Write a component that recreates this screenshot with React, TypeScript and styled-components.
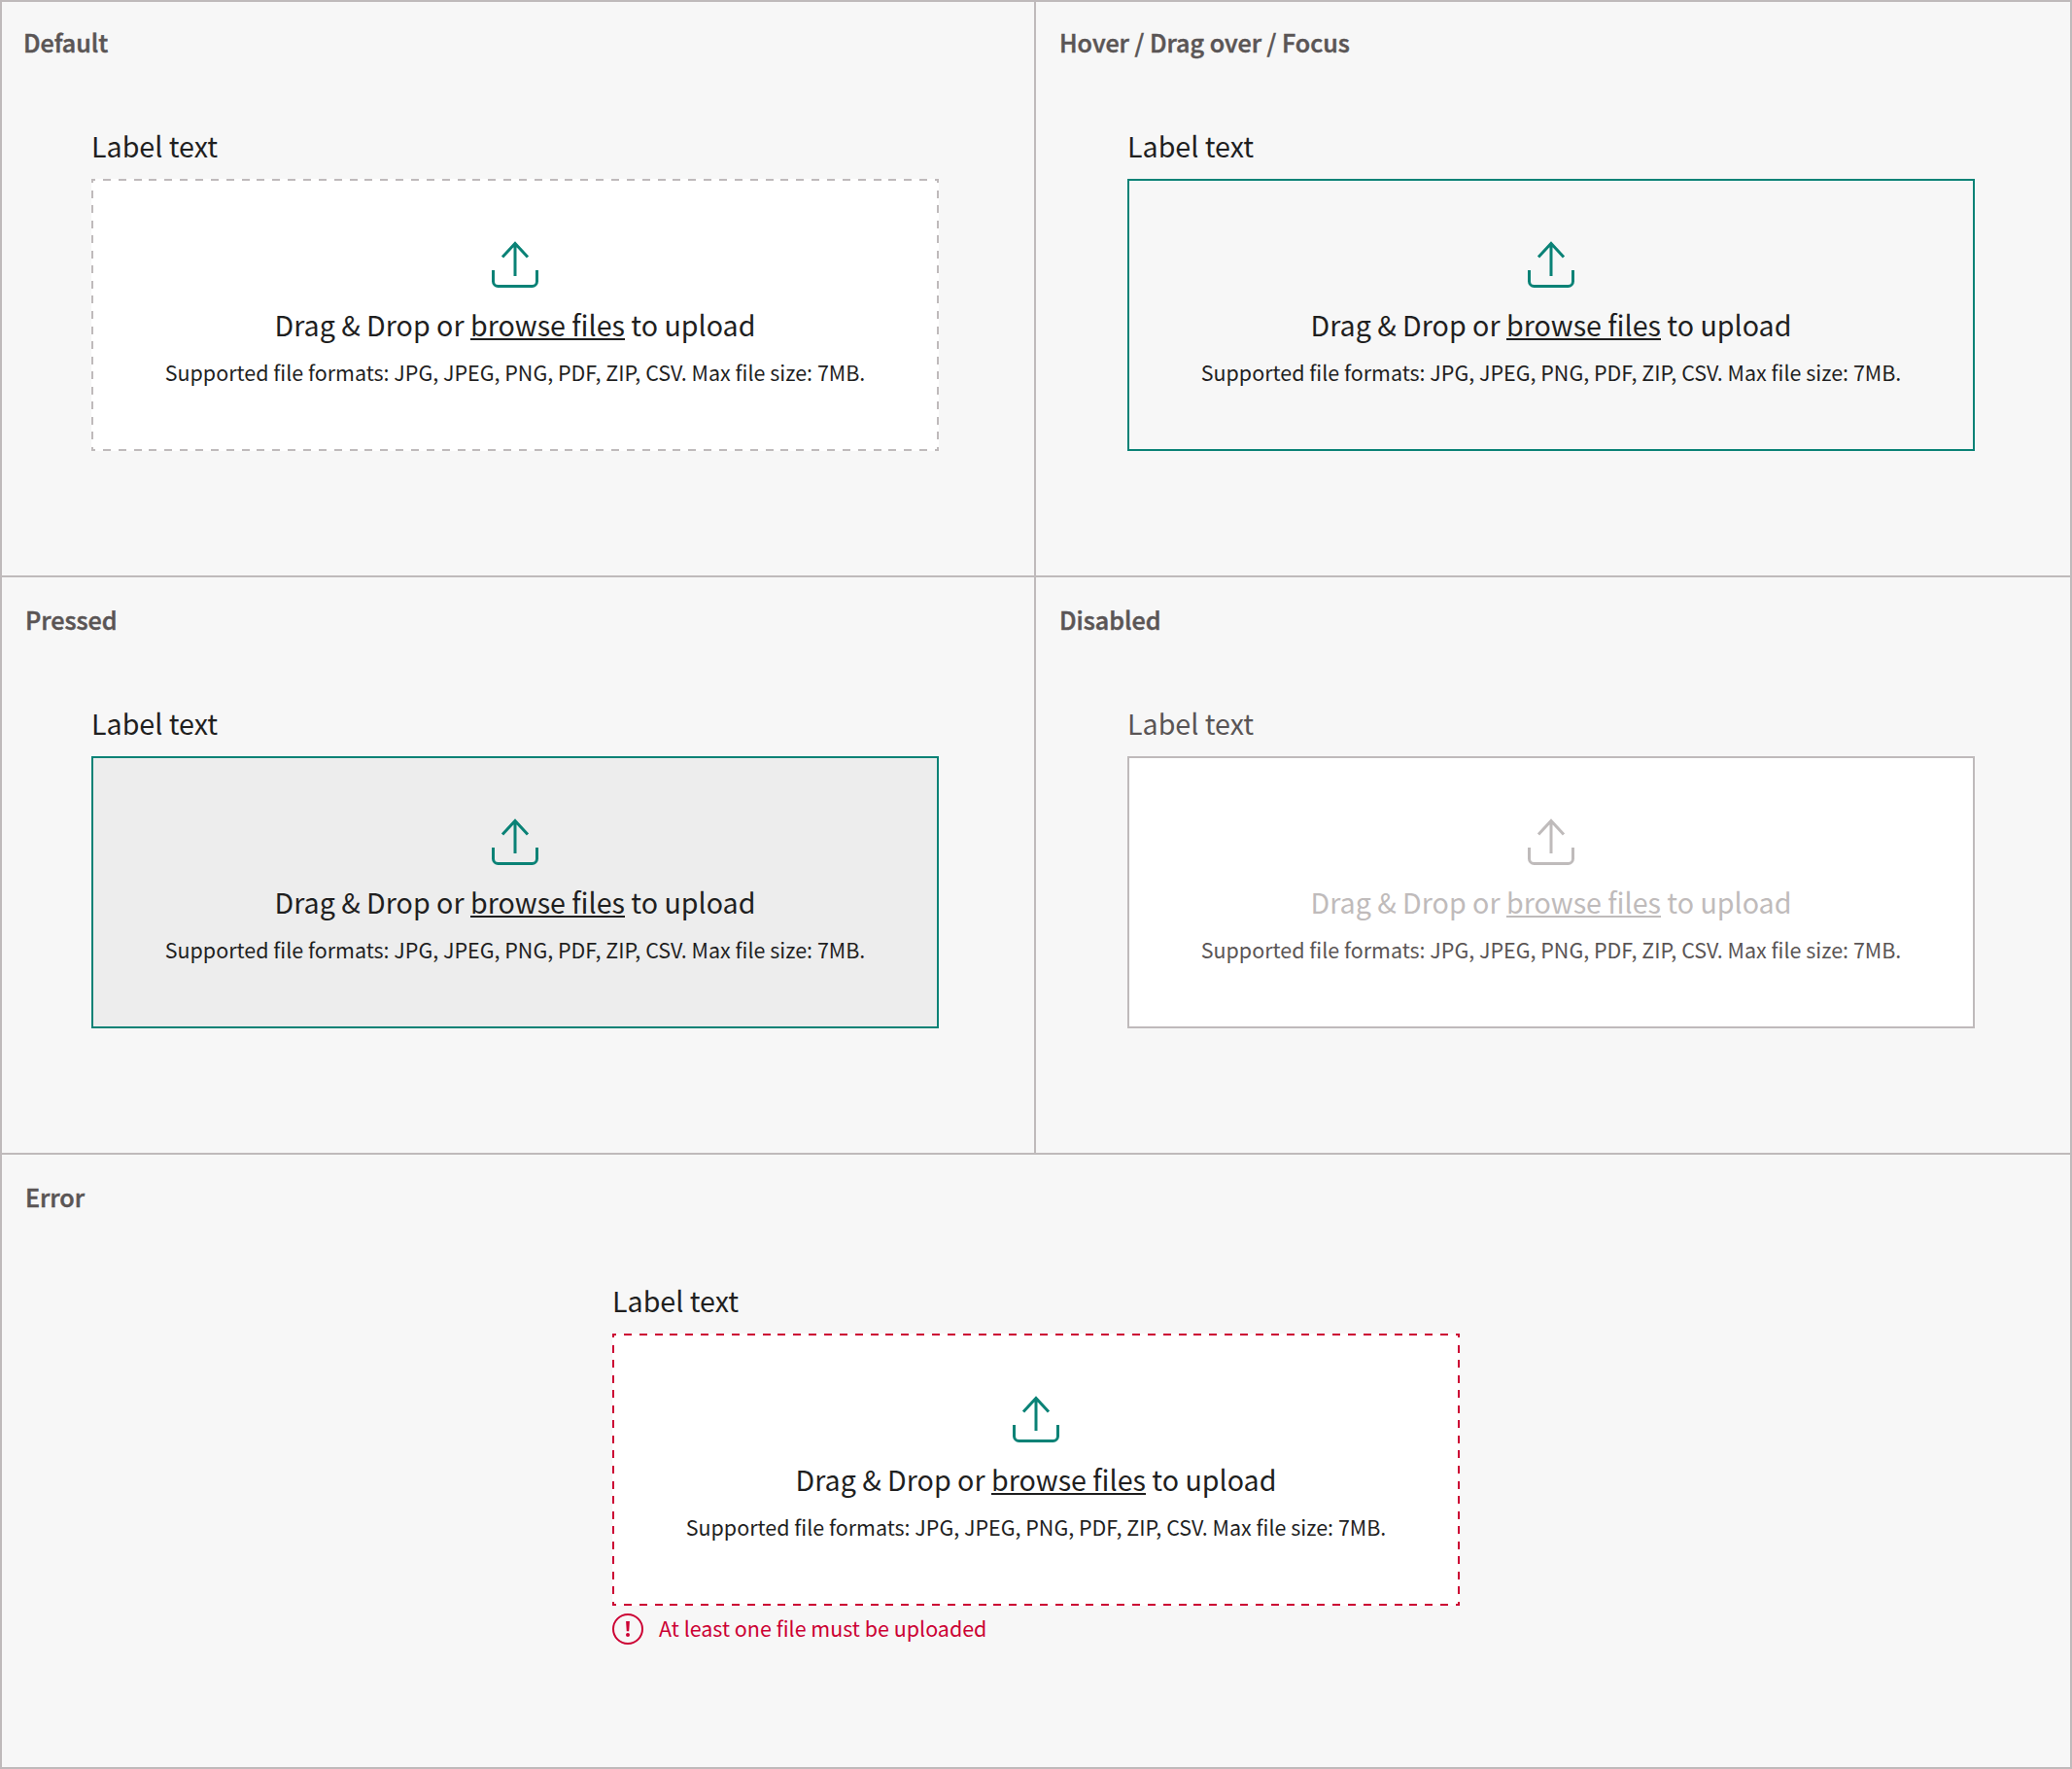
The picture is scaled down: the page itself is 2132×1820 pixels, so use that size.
import React from "react";
import styled, { createGlobalStyle } from "styled-components";

type State = "default" | "focus" | "pressed" | "disabled" | "error";

const color = {
  surface: "#f7f7f7",
  line: "#bfbabb",
  teal: "#0a8276",
  red: "#cc0033",
  ink: "#1f1f1f",
  muted: "#5a5555",
  faint: "#bfbbbb",
};

const GlobalStyle = createGlobalStyle`
  *, *::before, *::after { box-sizing: border-box; }
  body {
    margin: 0;
    background: ${color.surface};
    font-family: "Noto Sans CJK SC", "Noto Sans", sans-serif;
    color: ${color.ink};
  }
`;

const Board = styled.main`
  display: grid;
  grid-template-columns: 1066px 1066px;
  grid-template-rows: 594px 594px 632px;
  width: 2132px;
  height: 1820px;
  background: ${color.surface};
  box-shadow: inset 2px 2px 0 ${color.line};
`;

const Cell = styled.section<{ $wide?: boolean }>`
  grid-column: ${(p) => (p.$wide ? "1 / -1" : "auto")};
  display: flex;
  flex-direction: column;
  border-right: 2px solid ${color.line};
  border-bottom: 2px solid ${color.line};
  padding-top: 23px;
`;

const StateName = styled.h2<{ $indent: number }>`
  margin: 0 0 0 ${(p) => p.$indent}px;
  height: 40px;
  line-height: 40px;
  font-size: 25.1px;
  font-weight: 500;
  -webkit-text-stroke: 0.5px ${color.muted};
  color: ${color.muted};
`;

const Field = styled.div<{ $centered?: boolean }>`
  display: flex;
  flex-direction: column;
  width: 872px;
  margin: 63px 0 0 ${(p) => (p.$centered ? 630 : 94)}px;
`;

const Label = styled.label<{ $state: State }>`
  height: 47px;
  margin-bottom: 11px;
  line-height: 47px;
  font-size: 28.64px;
  color: ${(p) => (p.$state === "disabled" ? color.muted : color.ink)};
`;

const fill: Record<State, string> = {
  default: "#ffffff",
  focus: color.surface,
  pressed: "#ededed",
  disabled: "#ffffff",
  error: "#ffffff",
};

const edge: Record<State, string> = {
  default: color.line,
  focus: color.teal,
  pressed: color.teal,
  disabled: color.line,
  error: color.red,
};

/* Dashes start and end with a half dash, so that the corners are closed. */
const dashes = (direction: string, c: string, period: number) =>
  `repeating-linear-gradient(${direction}, ${c} 0 4px, transparent 4px ${period - 4}px, ${c} ${period - 4}px ${period}px)`;

const dashedEdge = (c: string) => {
  const across = dashes("to right", c, 872 / 55);
  const down = dashes("to bottom", c, 280 / 18);
  return `
    background-image: ${across}, ${across}, ${down}, ${down};
    background-repeat: no-repeat;
    background-position: 0 0, 0 100%, 0 0, 100% 0;
    background-size: 100% 2px, 100% 2px, 2px 100%, 2px 100%;
  `;
};

const DropZone = styled.div<{ $state: State }>`
  display: flex;
  flex-direction: column;
  align-items: center;
  height: 280px;
  padding-top: 64px;
  background-color: ${(p) => fill[p.$state]};
  ${(p) =>
    p.$state === "default" || p.$state === "error"
      ? dashedEdge(edge[p.$state])
      : `box-shadow: inset 0 0 0 2px ${edge[p.$state]};`}
`;

const UploadGlyph = styled.svg<{ $state: State }>`
  width: 48px;
  height: 48px;
  fill: none;
  stroke: ${(p) => (p.$state === "disabled" ? color.faint : color.teal)};
  stroke-width: 3;
`;

const Prompt = styled.p<{ $state: State }>`
  margin: 14px 0 0;
  height: 47px;
  line-height: 47px;
  font-size: 28.64px;
  white-space: nowrap;
  color: ${(p) => (p.$state === "disabled" ? color.faint : color.ink)};
`;

const Browse = styled.span`
  display: inline-block;
  height: 34px;
  line-height: 35px;
  border-bottom: 2px solid currentColor;
`;

const Hint = styled.p<{ $state: State }>`
  margin: 8px 0 0;
  height: 35px;
  line-height: 35px;
  font-size: 21.48px;
  white-space: nowrap;
  color: ${(p) => (p.$state === "disabled" ? color.muted : color.ink)};
`;

const ErrorRow = styled.div`
  display: flex;
  align-items: flex-start;
  gap: 16px;
  height: 32px;
  margin-top: 8px;
  font-size: 21.48px;
  line-height: 29px;
  white-space: nowrap;
  color: ${color.red};
`;

const AlertGlyph = styled.svg`
  width: 32px;
  height: 32px;
  fill: none;
`;

function Uploader({ state }: { state: State }) {
  return (
    <Field $centered={state === "error"}>
      <Label $state={state}>Label text</Label>
      <DropZone $state={state}>
        <UploadGlyph $state={state} viewBox="0 0 48 48" aria-hidden="true">
          <path d="M24 36V2.5M11 16.6 24 2.4 37 16.6" />
          <path d="M1.5 30V41.5a5 5 0 0 0 5 5H41.5a5 5 0 0 0 5-5V30" />
        </UploadGlyph>
        <Prompt $state={state}>
          Drag &amp; Drop or <Browse>browse files</Browse> to upload
        </Prompt>
        <Hint $state={state}>
          Supported file formats: JPG, JPEG, PNG, PDF, ZIP, CSV. Max file size: 7MB.
        </Hint>
      </DropZone>
      {state === "error" && (
        <ErrorRow>
          <AlertGlyph viewBox="0 0 32 32" aria-hidden="true">
            <circle cx="16" cy="16" r="15" stroke={color.red} strokeWidth="2" />
            <path d="M14.1 8h3.8l-.7 10.2h-2.4z" fill={color.red} />
            <circle cx="16" cy="22" r="2" fill={color.red} />
          </AlertGlyph>
          <span>At least one file must be uploaded</span>
        </ErrorRow>
      )}
    </Field>
  );
}

const panels: { name: string; state: State; indent: number }[] = [
  { name: "Default", state: "default", indent: 24 },
  { name: "Hover / Drag over / Focus", state: "focus", indent: 24 },
  { name: "Pressed", state: "pressed", indent: 26 },
  { name: "Disabled", state: "disabled", indent: 24 },
  { name: "Error", state: "error", indent: 26 },
];

export default function App() {
  return (
    <>
      <GlobalStyle />
      <Board>
        {panels.map((p) => (
          <Cell key={p.state} $wide={p.state === "error"}>
            <StateName $indent={p.indent}>{p.name}</StateName>
            <Uploader state={p.state} />
          </Cell>
        ))}
      </Board>
    </>
  );
}
